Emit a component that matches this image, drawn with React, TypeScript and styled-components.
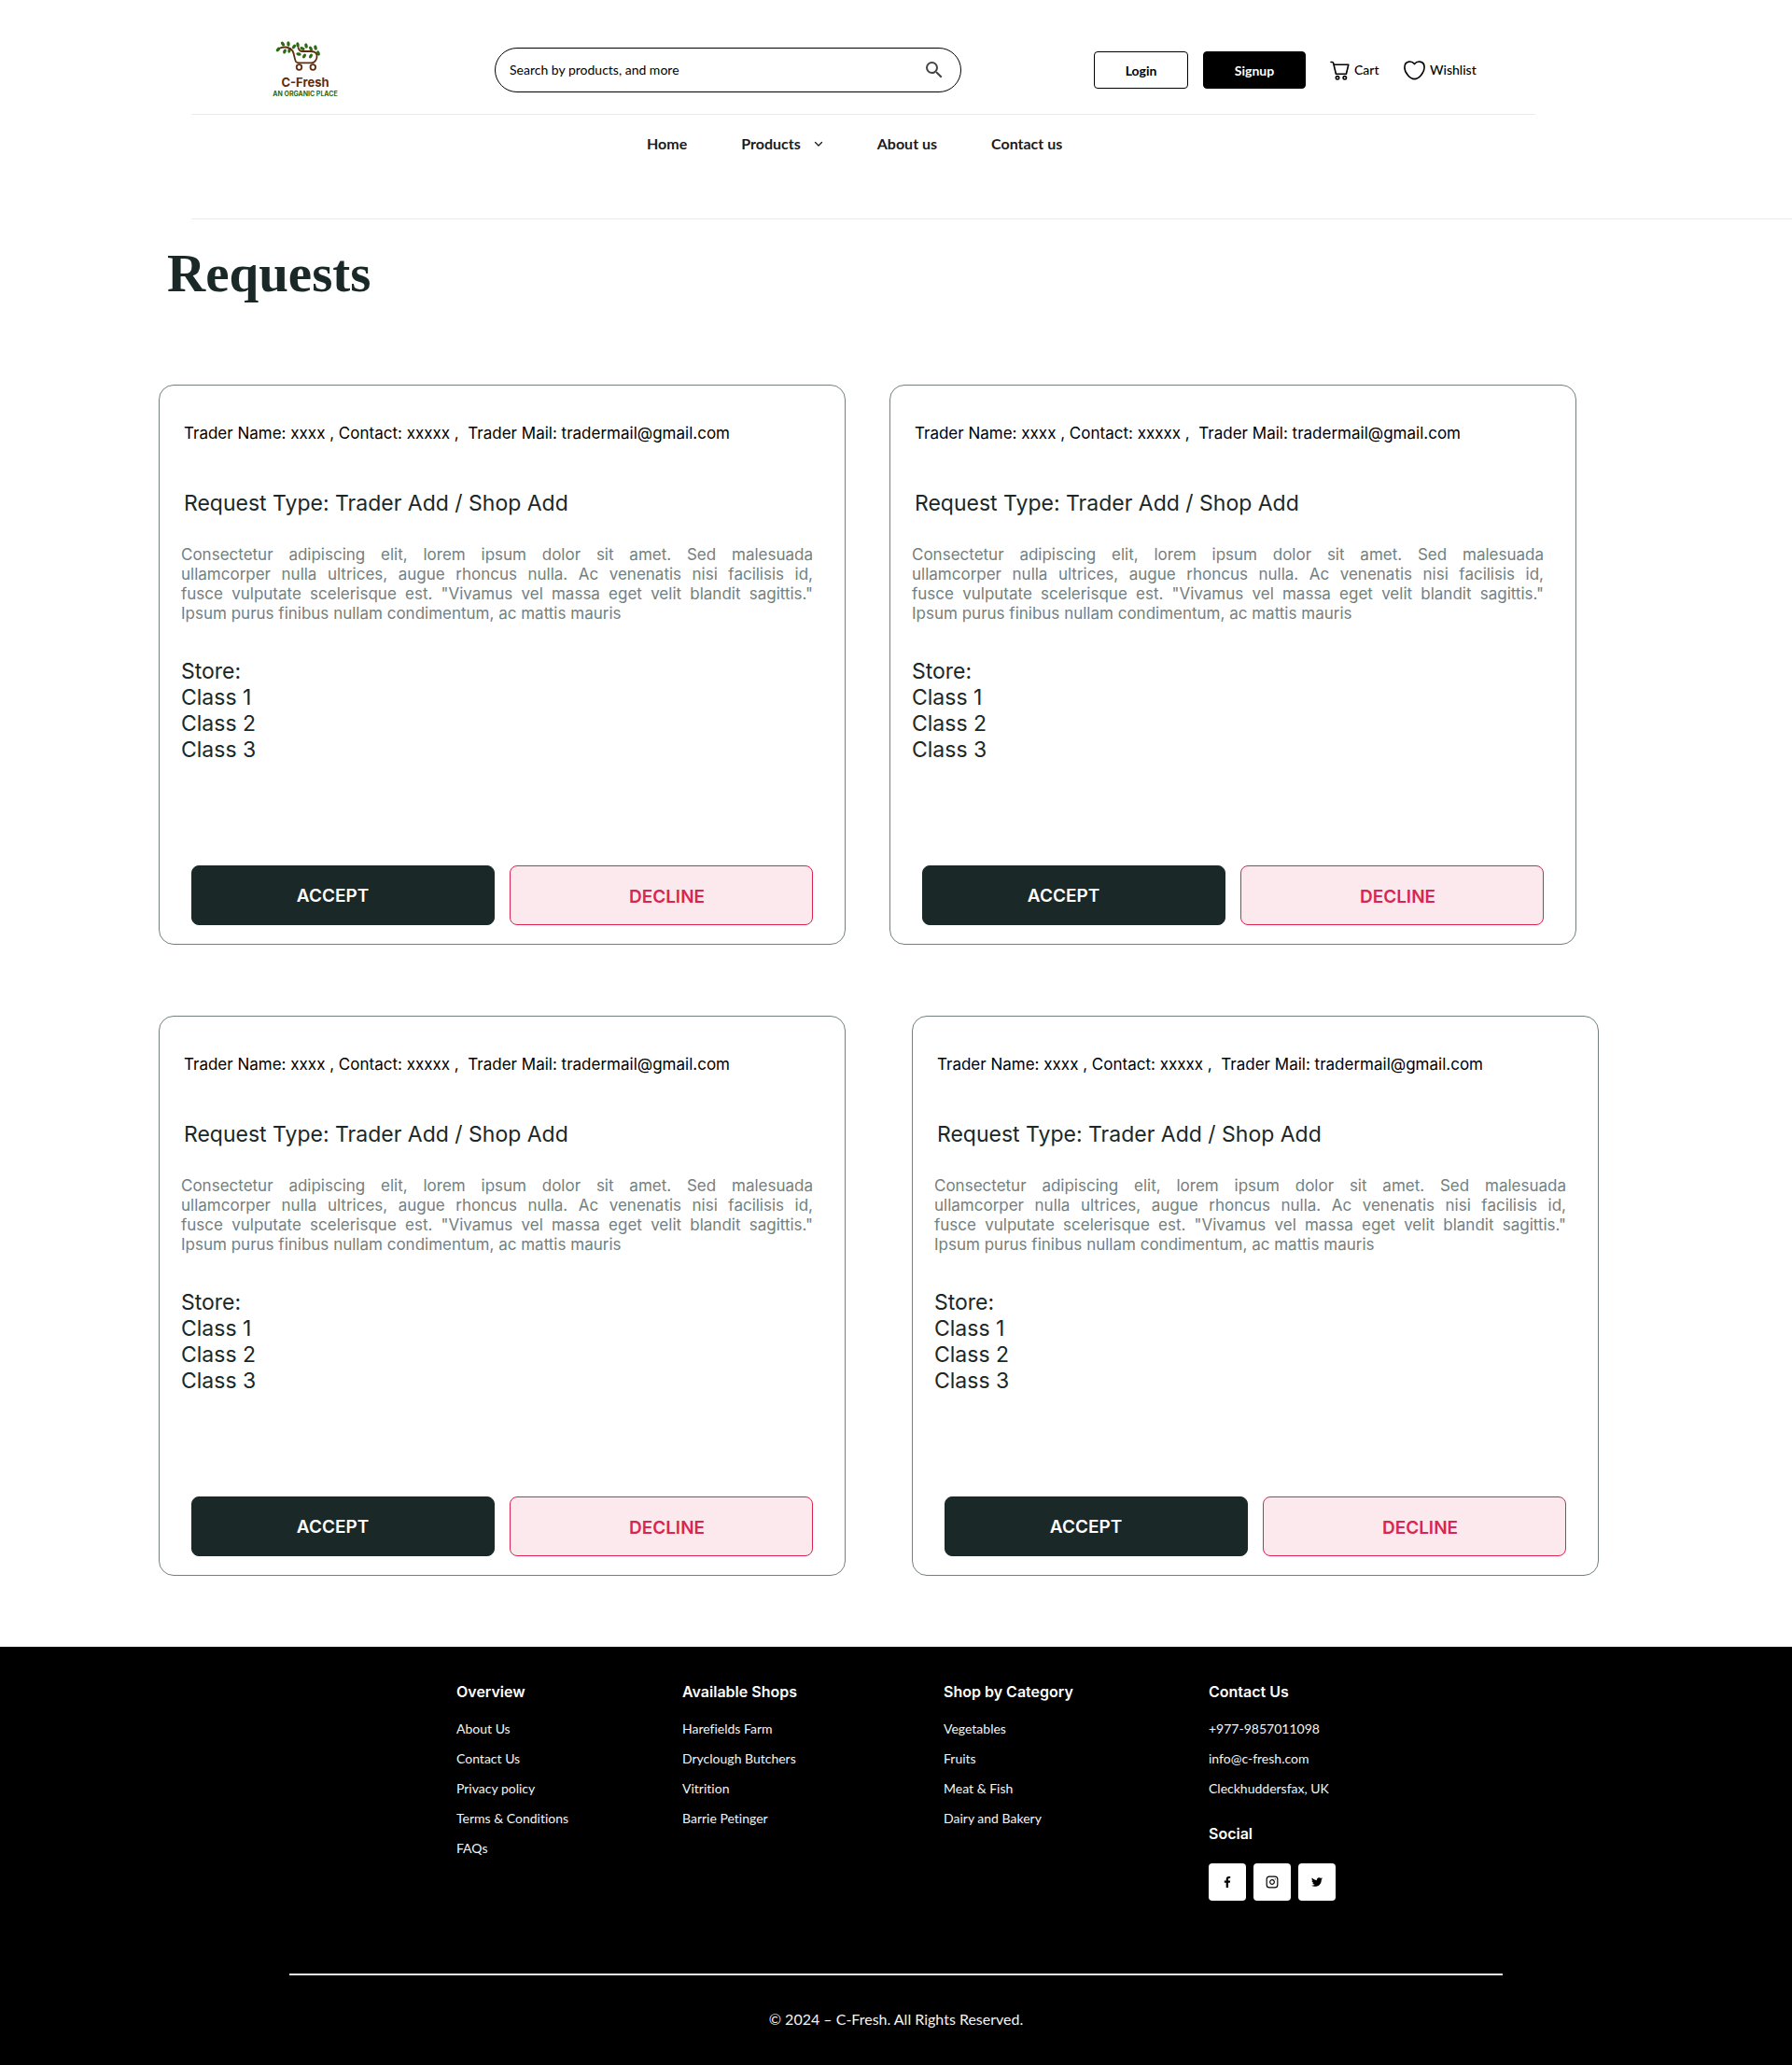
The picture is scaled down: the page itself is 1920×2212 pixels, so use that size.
import React from 'react';
import styled, { createGlobalStyle, css } from 'styled-components';
import { MdSearch } from 'react-icons/md';
import { FaFacebookF, FaTwitter } from 'react-icons/fa';
import { FiInstagram } from 'react-icons/fi';

const color = {
  ink: '#1a2828',
  muted: '#738080',
  line: '#ebebeb',
  danger: '#d92550',
  dangerSoft: '#fbe9ed',
  brown: '#5f2c0e',
  green: '#2c6a12',
};

const font = {
  ui: 'Lato, "Open Sans", sans-serif',
  card: 'Inter, "Liberation Sans", sans-serif',
  heading: 'Inter, "Liberation Sans", sans-serif',
  title: '"Liberation Serif", serif',
};

const GlobalStyle = createGlobalStyle`
  *, *::before, *::after { box-sizing: border-box; }
  body { margin: 0; background: #fff; color: #000; font-family: ${font.ui}; }
  h1, h2, h3, p, ul { margin: 0; padding: 0; }
  ul { list-style: none; }
  a { color: inherit; text-decoration: none; }
  button, input { font: inherit; }
`;

const Header = styled.header`
  margin-left: 205px;
  border-bottom: 1px solid ${color.line};
`;

const TopBar = styled.div`
  display: flex;
  align-items: flex-start;
  max-width: 1440px;
  height: 123px;
  padding: 28px 0 0 86px;
  border-bottom: 1px solid ${color.line};
`;

const Brand = styled.a`
  display: flex;
  flex-direction: column;
  align-items: center;
  flex: none;
  width: 72px;
  padding-top: 16px;
  font-family: ${font.heading};
  font-weight: 700;
  white-space: nowrap;
`;

const Mark = styled.svg`
  align-self: flex-start;
  margin-left: 4px;
`;

const BrandName = styled.span`
  margin-top: 3px;
  color: ${color.brown};
  font-size: 13px;
  line-height: 16px;
`;

const BrandTag = styled.span`
  color: ${color.green};
  font-size: 7px;
  line-height: 10px;
`;

const Search = styled.form`
  display: flex;
  align-items: center;
  flex: 0 1 500px;
  height: 48px;
  margin: 23px 142px 0 167px;
  padding: 0 16px 0 15px;
  border: 1px solid #000;
  border-radius: 24px;
`;

const SearchInput = styled.input`
  flex: 1;
  min-width: 0;
  padding: 0;
  border: 0;
  outline: 0;
  background: transparent;
  color: #000;
  font-size: 14px;
  line-height: 20px;

  &::placeholder { color: #000; opacity: 1; }
`;

const SearchButton = styled.button`
  display: flex;
  padding: 0;
  border: 0;
  background: none;
  color: #444;
  font-size: 24px;
`;

const Actions = styled.div`
  display: flex;
  align-items: center;
  flex: none;
  height: 40px;
  margin-top: 27px;
`;

const AuthButton = styled.button<{ $filled?: boolean }>`
  width: ${p => (p.$filled ? 110 : 101)}px;
  height: 40px;
  margin-right: ${p => (p.$filled ? 26 : 16)}px;
  padding: 0;
  border: 1px solid #000;
  border-radius: 4px;
  background: ${p => (p.$filled ? '#000' : '#fff')};
  color: ${p => (p.$filled ? '#fff' : '#000')};
  font-size: 14px;
  font-weight: 700;
`;

const IconLink = styled.a`
  display: flex;
  align-items: center;
  gap: 5px;
  min-width: 55px;
  margin-right: 24px;
  font-size: 14px;
  font-weight: 500;
  line-height: 20px;
`;

const Nav = styled.nav`
  height: 111px;
  padding: 20px 0 0 488px;
`;

const NavList = styled.ul`
  display: flex;
  gap: 58px;
  color: #1b1b1b;
  font-size: 16px;
  font-weight: 700;
  line-height: 22px;
`;

const NavLink = styled.a`
  display: flex;
  align-items: center;
  gap: 14px;
`;

const Main = styled.main`
  padding: 26px 170px 76px;
`;

const Title = styled.h1`
  padding-left: 9px;
  color: ${color.ink};
  font-family: ${font.title};
  font-size: 57px;
  font-weight: 700;
  line-height: 64px;
`;

const Requests = styled.div`
  display: flex;
  flex-direction: column;
  gap: 76px;
  margin-top: 87px;
`;

const RequestRow = styled.div<{ $gap: number }>`
  display: flex;
  gap: ${p => p.$gap}px;
  margin-right: -170px;
`;

const Card = styled.article`
  display: flex;
  flex-direction: column;
  flex: 0 1 736px;
  min-height: 600px;
  padding: 40px 34px 20px 23px;
  border: 1px solid ${color.muted};
  border-radius: 16px;
  color: ${color.ink};
  font-family: ${font.card};
`;

const TraderLine = styled.p`
  padding-left: 3px;
  color: #000;
  font-size: 17px;
  line-height: 22px;
  white-space: pre-wrap;
`;

const RequestType = styled.h2`
  margin-top: 50px;
  padding-left: 3px;
  font-size: 23px;
  font-weight: 400;
  line-height: 28px;
`;

const Description = styled.p`
  margin-top: 31px;
  color: ${color.muted};
  font-size: 17px;
  line-height: 21px;
  text-align: justify;
`;

const DescriptionLine = styled.span`
  display: block;

  &:not(:last-child) { text-align-last: justify; }
`;

const Store = styled.div`
  margin-top: 37px;
  font-size: 23px;
  line-height: 28px;
`;

const StoreLabel = styled.h3`
  font: inherit;
`;

const CardActions = styled.div`
  display: grid;
  grid-template-columns: 1fr 1fr;
  gap: 16px;
  margin-top: auto;
  padding-left: 11px;
`;

const accept = css`
  padding: 0 22px 0 0;
  border-color: ${color.ink};
  background: ${color.ink};
  color: #fff;
`;

const decline = css`
  padding: 2px 0 0 12px;
  border-color: ${color.danger};
  background: ${color.dangerSoft};
  color: ${color.danger};
`;

const DecisionButton = styled.button<{ $kind: 'accept' | 'decline' }>`
  height: 64px;
  border: 1px solid;
  border-radius: 8px;
  font-size: 19px;
  font-weight: 600;
  ${p => (p.$kind === 'accept' ? accept : decline)}
`;

const Footer = styled.footer`
  padding: 37px 24px;
  background: #000;
  color: #f4f4f4;
`;

const FooterInner = styled.div`
  max-width: 1300px;
  margin: 0 auto;
`;

const FooterColumns = styled.div`
  display: grid;
  grid-template-columns: 242px 280px 284px 1fr;
  min-height: 313px;
  padding-left: 179px;
`;

const FooterHeading = styled.h3`
  color: #fff;
  font-family: ${font.heading};
  font-size: 16px;
  font-weight: 600;
  line-height: 22px;
`;

const FooterList = styled.ul`
  display: grid;
  gap: 12px;
  margin: 19px 0 27px;
  font-size: 14px;
  font-variant-ligatures: none;
  line-height: 20px;
`;

const SocialList = styled.ul`
  display: flex;
  gap: 8px;
  margin-top: 21px;
`;

const SocialLink = styled.a`
  display: flex;
  align-items: center;
  justify-content: center;
  width: 40px;
  height: 40px;
  border-radius: 4px;
  background: #fff;
  color: #000;
`;

const Copyright = styled.p`
  padding: 35px 0 0;
  border-top: 2px solid ${color.line};
  font-size: 16px;
  line-height: 24px;
  text-align: center;
`;

const leaves: [number, number, number][] = [
  [3, 9, -50], [8, 3, 60], [14, 3, 85], [10, 11, -65], [15, 10, -80],
  [20, 6, -50], [24, 4, 80], [29, 8, 20], [33, 5, 75], [38, 8, 60],
  [43, 7, 75], [46, 13, 70], [31, 16, -60], [38, 16, -60], [25, 14, 10],
];

function LogoMark() {
  return (
    <Mark width="48" height="33" viewBox="0 0 48 33" fill="none" aria-hidden="true">
      <g fill={color.green}>
        {leaves.map(([x, y, turn]) => (
          <ellipse key={`${x}-${y}`} cx={x} cy={y} rx="2.700" ry="1.700" transform={`rotate(${turn} ${x} ${y})`} />
        ))}
      </g>
      <path
        d="M5 7.500c5-2 11-1 13.500 3 2 4 2 9 3.500 11.500.8 1 2 1.300 3.500 1.300H39c4 0 6-5 5.500-8.300C44 11.500 41 11 37.500 11H29c-3 0-4-2-4.500-4"
        stroke={color.brown}
        strokeWidth="1.800"
        strokeLinecap="round"
      />
      <circle cx="25.500" cy="28" r="2.800" stroke={color.brown} strokeWidth="1.800" />
      <circle cx="40.300" cy="28" r="2.800" stroke={color.brown} strokeWidth="1.800" />
    </Mark>
  );
}

function CartIcon() {
  return (
    <svg width="21" height="21" viewBox="0 0 21 21" fill="none" stroke="#000" strokeWidth="1.6" strokeLinecap="round" strokeLinejoin="round" aria-hidden="true">
      <path d="M1 1.500h1.400c.7 0 1 .4 1.200 1L6.400 14.200h11L19.800 4.200H4.200" />
      <circle cx="8" cy="18.300" r="1.700" />
      <circle cx="15.800" cy="18.300" r="1.700" />
    </svg>
  );
}

function HeartIcon() {
  return (
    <svg width="23" height="21" viewBox="0 0 23 21" fill="none" stroke="#000" strokeWidth="1.6" strokeLinejoin="round" aria-hidden="true">
      <path d="M11.500 3.600C9.800 1.400 7.600.9 5.800 1.100 2.800 1.400.9 4 .9 7.200c0 5.500 5.800 12.400 10.600 12.400S22.100 12.700 22.100 7.200c0-3.200-1.900-5.800-4.900-6.100-1.800-.2-4 .3-5.700 2.500Z" />
    </svg>
  );
}

function ChevronIcon() {
  return (
    <svg width="10" height="10" viewBox="0 0 10 10" fill="none" stroke="#1b1b1b" strokeWidth="1.3" strokeLinecap="round" strokeLinejoin="round" aria-hidden="true">
      <path d="M1.500 3.500 5 7l3.500-3.500" />
    </svg>
  );
}

const description = [
  'Consectetur adipiscing elit, lorem ipsum dolor sit amet. Sed malesuada',
  'ullamcorper nulla ultrices, augue rhoncus nulla. Ac venenatis nisi facilisis id,',
  'fusce vulputate scelerisque est. "Vivamus vel massa eget velit blandit sagittis."',
  'Ipsum purus finibus nullam condimentum, ac mattis mauris',
];

const footerColumns = [
  { title: 'Overview', items: ['About Us', 'Contact Us', 'Privacy policy', 'Terms & Conditions', 'FAQs'] },
  { title: 'Available Shops', items: ['Harefields Farm', 'Dryclough Butchers', 'Vitrition', 'Barrie Petinger'] },
  { title: 'Shop by Category', items: ['Vegetables', 'Fruits', 'Meat & Fish', 'Dairy and Bakery'] },
  { title: 'Contact Us', items: ['+977-9857011098', 'info@c-fresh.com', 'Cleckhuddersfax, UK'] },
];

const socials = [
  { name: 'Facebook', Icon: FaFacebookF, size: 12 },
  { name: 'Instagram', Icon: FiInstagram, size: 14 },
  { name: 'Twitter', Icon: FaTwitter, size: 12 },
];

const rows = [
  { gap: 47, ids: [1, 2] },
  { gap: 71, ids: [3, 4] },
];

function RequestCard() {
  return (
    <Card>
      <TraderLine>{'Trader Name: xxxx , Contact: xxxxx ,  Trader Mail: tradermail@gmail.com'}</TraderLine>
      <RequestType>Request Type: Trader Add / Shop Add</RequestType>
      <Description>
        {description.map(line => <DescriptionLine key={line}>{line} </DescriptionLine>)}
      </Description>
      <Store>
        <StoreLabel>Store:</StoreLabel>
        <ul>
          <li>Class 1</li>
          <li>Class 2</li>
          <li>Class 3</li>
        </ul>
      </Store>
      <CardActions>
        <DecisionButton type="button" $kind="accept">ACCEPT</DecisionButton>
        <DecisionButton type="button" $kind="decline">DECLINE</DecisionButton>
      </CardActions>
    </Card>
  );
}

export default function App() {
  return (
    <>
      <GlobalStyle />
      <Header>
        <TopBar>
          <Brand href="#">
            <LogoMark />
            <BrandName>C-Fresh</BrandName>
            <BrandTag>AN ORGANIC PLACE</BrandTag>
          </Brand>
          <Search role="search" onSubmit={e => e.preventDefault()}>
            <SearchInput type="search" aria-label="Search" placeholder="Search by products, and more" />
            <SearchButton type="submit" aria-label="Search"><MdSearch /></SearchButton>
          </Search>
          <Actions>
            <AuthButton type="button">Login</AuthButton>
            <AuthButton type="button" $filled>Signup</AuthButton>
            <IconLink href="#"><CartIcon />Cart</IconLink>
            <IconLink href="#"><HeartIcon />Wishlist</IconLink>
          </Actions>
        </TopBar>
        <Nav>
          <NavList>
            <li><NavLink href="#">Home</NavLink></li>
            <li><NavLink href="#">Products<ChevronIcon /></NavLink></li>
            <li><NavLink href="#">About us</NavLink></li>
            <li><NavLink href="#">Contact us</NavLink></li>
          </NavList>
        </Nav>
      </Header>
      <Main>
        <Title>Requests</Title>
        <Requests>
          {rows.map(row => (
            <RequestRow key={row.gap} $gap={row.gap}>
              {row.ids.map(id => <RequestCard key={id} />)}
            </RequestRow>
          ))}
        </Requests>
      </Main>
      <Footer>
        <FooterInner>
          <FooterColumns>
            {footerColumns.map((column, i) => (
              <section key={column.title}>
                <FooterHeading>{column.title}</FooterHeading>
                <FooterList>
                  {column.items.map(item => <li key={item}><a href="#">{item}</a></li>)}
                </FooterList>
                {i === footerColumns.length - 1 && (
                  <>
                    <FooterHeading>Social</FooterHeading>
                    <SocialList>
                      {socials.map(({ name, Icon, size }) => (
                        <li key={name}><SocialLink href="#" aria-label={name}><Icon size={size} /></SocialLink></li>
                      ))}
                    </SocialList>
                  </>
                )}
              </section>
            ))}
          </FooterColumns>
          <Copyright>© 2024 – C-Fresh. All Rights Reserved.</Copyright>
        </FooterInner>
      </Footer>
    </>
  );
}
